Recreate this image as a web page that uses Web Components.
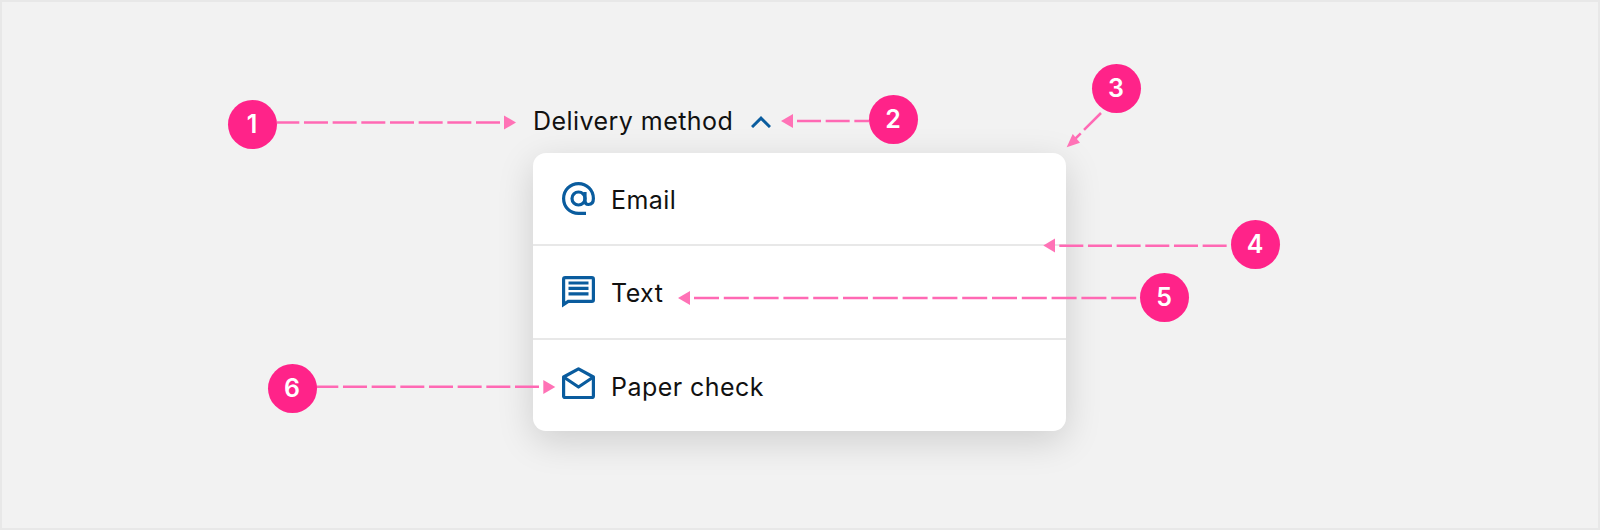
<!DOCTYPE html>
<html lang="en">
<head>
<meta charset="utf-8">
<title>Delivery method dropdown anatomy</title>
<style>
    html, body { margin: 0; height: 100%; background: #f2f2f2; }
    body { font-family: Inter, "Liberation Sans", sans-serif; overflow: hidden; }
</style>
</head>
<body>

<anatomy-board>
    <delivery-dropdown label="Delivery method">
        <delivery-option label="Email" icon="email"></delivery-option>
        <delivery-option label="Text" icon="text"></delivery-option>
        <delivery-option label="Paper check" icon="mail"></delivery-option>
    </delivery-dropdown>

    <callout-arrows slot="overlay"></callout-arrows>
    <callout-pin slot="overlay" n="1" x="252" y="124"></callout-pin>
    <callout-pin slot="overlay" n="2" x="893" y="119"></callout-pin>
    <callout-pin slot="overlay" n="3" x="1116" y="88"></callout-pin>
    <callout-pin slot="overlay" n="4" x="1255" y="244"></callout-pin>
    <callout-pin slot="overlay" n="5" x="1164" y="297"></callout-pin>
    <callout-pin slot="overlay" n="6" x="292" y="388"></callout-pin>
</anatomy-board>

<script>
// icons
const ICONS = {
    email: `<svg viewBox="0 0 33 33" fill="none" stroke="currentColor" stroke-width="3.2"><circle cx="16.500" cy="16.500" r="6.500"/><path d="M23 10v8.700c0 2.400 1.500 3.800 3.500 3.800 2.600 0 4.900-1.800 4.900-6C31.400 8 24.800 1.600 16.500 1.600S1.600 8 1.600 16.500 8 31.400 16.500 31.400H24"/></svg>`,
    text: `<svg viewBox="0 0 33 32" fill="none" stroke="currentColor" stroke-width="3.2"><path d="M1.600 28.500V3.200C1.600 2.200 2.200 1.600 3.200 1.600h26.600c1 0 1.600.6 1.600 1.600v20.600c0 1-.6 1.600-1.600 1.600H6.200z"/><path d="M6.500 7h20M6.500 12.400h20M6.500 17.800h20"/></svg>`,
    mail: `<svg viewBox="0 0 33 32" fill="none" stroke="currentColor" stroke-width="3.200" stroke-linejoin="round"><path d="M1.600 10 16.500 1.800l14.900 8.200v19.300c0 .7-.5 1.200-1.200 1.200H2.800c-.7 0-1.200-.5-1.200-1.200z"/><path d="M1.600 10 16.500 20l14.900-10"/></svg>`
};

// page frame, overlay sits on top of the flow content
class AnatomyBoard extends HTMLElement {
    constructor() {
        super();
        this.attachShadow({ mode: "open" }).innerHTML = `
            <style>
                :host {
                    display: block;
                    position: relative;
                    box-sizing: border-box;
                    width: 1600px;
                    height: 530px;
                    border: 2px solid #e8e8e8;
                    background: #f2f2f2;
                    padding: 101px 0 0 531px;
                }
                .overlay { position: absolute; inset: -2px; pointer-events: none; }
            </style>
            <slot></slot>
            <div class="overlay"><slot name="overlay"></slot></div>
        `;
    }
}

class DeliveryDropdown extends HTMLElement {
    constructor() {
        super();
        this.attachShadow({ mode: "open" }).innerHTML = `
            <style>
                :host { display: block; width: 533px; color: #111; }
                .head {
                    display: flex;
                    align-items: center;
                    gap: 18px;
                    height: 36px;
                    margin-bottom: 14px;
                    font-size: 25px;
                    letter-spacing: .45px;
                }
                .chevron { width: 20px; height: 12px; color: #0a5c9e; margin-top: 2px; }
                .menu {
                    display: flex;
                    flex-direction: column;
                    height: 278px;
                    background: #fff;
                    border-radius: 13px;
                    box-shadow: 0 10px 36px rgba(0, 0, 0, .15);
                    overflow: hidden;
                }
            </style>
            <div class="head">
                <span class="title"></span>
                <svg class="chevron" viewBox="0 0 20 12" fill="none" stroke="currentColor" stroke-width="3"><path d="M1 11 10 2.200 19 11"/></svg>
            </div>
            <div class="menu"><slot></slot></div>
        `;
        this.shadowRoot.querySelector(".title").textContent = this.getAttribute("label");
    }
}

class DeliveryOption extends HTMLElement {
    constructor() {
        super();
        this.attachShadow({ mode: "open" }).innerHTML = `
            <style>
                :host {
                    display: flex;
                    flex: 1;
                    align-items: center;
                    gap: 16px;
                    padding-left: 29px;
                    font-size: 25px;
                    letter-spacing: .45px;
                    border-top: 2px solid #e8e8e8;
                }
                :host(:first-child) { border-top: 0; }
                .icon { display: flex; width: 33px; color: #0a5c9e; }
                :host([icon="mail"]) .icon { margin-top: -4px; }
                svg { display: block; width: 33px; }
                .label { padding-top: 3px; }
            </style>
            <span class="icon"></span>
            <span class="label"></span>
        `;
        this.shadowRoot.querySelector(".icon").innerHTML = ICONS[this.getAttribute("icon")];
        this.shadowRoot.querySelector(".label").textContent = this.getAttribute("label");
    }
}

// numbered pin, its place on the canvas is the content
class CalloutPin extends HTMLElement {
    constructor() {
        super();
        this.attachShadow({ mode: "open" }).innerHTML = `
            <style>
                :host {
                    position: absolute;
                    display: flex;
                    align-items: center;
                    justify-content: center;
                    width: 49px;
                    height: 49px;
                    margin: -24.5px 0 0 -24.5px;
                    border-radius: 50%;
                    background: #ff2389;
                    color: #fff;
                    font-size: 25px;
                    font-weight: 600;
                }
            </style>
            <slot></slot>
        `;
        this.textContent = this.getAttribute("n");
        this.style.left = this.getAttribute("x") + "px";
        this.style.top = this.getAttribute("y") + "px";
    }
}

class CalloutArrows extends HTMLElement {
    constructor() {
        super();
        this.attachShadow({ mode: "open" }).innerHTML = `
            <style>
                :host { position: absolute; inset: 0; display: block; }
                svg { display: block; }
                path { stroke: #ff69b4; stroke-width: 2.5; stroke-dasharray: 24 4.67; fill: none; }
                polygon { fill: #ff72b6; }
            </style>
            <svg width="1600" height="530">
                <path d="M500 122.500H277"/><polygon points="516,122.500 504,115.500 504,129.500"/>
                <path d="M797 121H869"/><polygon points="781,121 793,114 793,128"/>
                <path d="M1101 113 1073 141"/><polygon points="1066.700,147.300 1072.700,134 1080,142.700"/>
                <path d="M1059.300 245.700H1231"/><polygon points="1043.300,245.500 1055,238.500 1055,252.500"/>
                <path d="M694 298H1139" style="stroke-dasharray:25 4.800"/><polygon points="678,298 690,291 690,305"/>
                <path d="M539 386.700H316"/><polygon points="555.300,387 543.300,380 543.300,394"/>
            </svg>
        `;
    }
}

customElements.define("anatomy-board", AnatomyBoard);
customElements.define("delivery-dropdown", DeliveryDropdown);
customElements.define("delivery-option", DeliveryOption);
customElements.define("callout-pin", CalloutPin);
customElements.define("callout-arrows", CalloutArrows);
</script>
</body>
</html>
